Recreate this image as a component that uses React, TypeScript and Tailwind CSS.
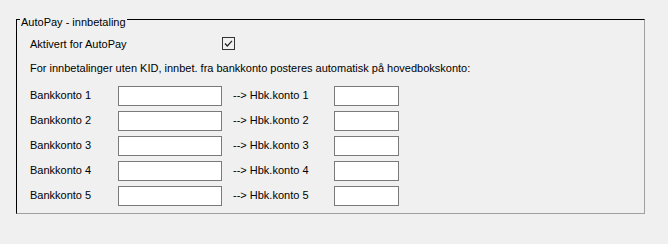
const rows = [1, 2, 3, 4, 5]

export default function App() {
  return (
    <div className="h-[244px] w-[668px] bg-[#f0f0f0] pl-4 pt-[19px] font-['Liberation_Sans',Arial,sans-serif] text-[11px] leading-[13px] text-black">
      {/* group box */}
      <div className="relative h-[195px] w-[629px] border border-b-[#a0a0a0] border-l-black border-r-[#a0a0a0] border-t-black pl-[13px] pt-[18px]">
        <span className="absolute left-[3px] top-[-4px] bg-[#f0f0f0] px-[1px]">AutoPay - innbetaling</span>

        <div className="flex h-[13px] items-center">
          <span className="w-[192px]">Aktivert for AutoPay</span>
          <span className="mb-[3px] flex h-[13px] w-[13px] items-center justify-center border border-[#333] bg-[#f0f0f0]">
            <svg width="9" height="9" viewBox="0 0 9 9">
              <path d="M1 4.5 L3.3 7 L8 1.8" fill="none" stroke="#222" strokeWidth="1.2" />
            </svg>
          </span>
        </div>

        <div className="mt-[11px] flex h-[13px] items-center">
          For innbetalinger uten KID, innbet. fra bankkonto posteres automatisk på hovedbokskonto:
        </div>

        <div className="mt-[11px] grid grid-cols-[88px_104px_112px_65px] gap-y-[5px]">
          {rows.map(n => (
            <div key={n} className="contents">
              <div className="flex h-5 items-center pb-[2px]">Bankkonto {n}</div>
              <input className="h-5 border border-[#7a7a7a] bg-white outline-none" />
              <div className="flex h-5 items-center pb-[2px] pl-[11px]">--&gt; Hbk.konto {n}</div>
              <input className="h-5 border border-[#7a7a7a] bg-white outline-none" />
            </div>
          ))}
        </div>
      </div>
    </div>
  )
}
